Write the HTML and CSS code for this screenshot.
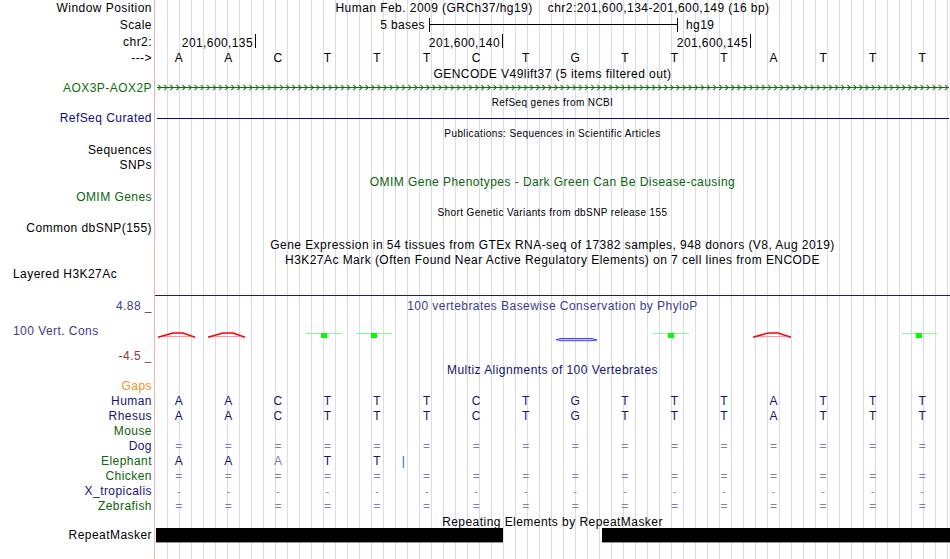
FILE: index.html
```html
<!DOCTYPE html>
<html lang="en">

<head>
	<meta charset="UTF-8">
	<meta name="viewport" content="width=device-width, initial-scale=1.0">
	<title>Genome Browser - chr2:201,600,134-201,600,149</title>
	<link rel="stylesheet" href="styles.css">
</head>

<body>
	<div class="browser">

		<div class="row r-pos">
			<div class="lab">Window Position</div>
			<div class="trk">Human Feb. 2009 (GRCh37/hg19)&nbsp;&nbsp;&nbsp; chr2:201,600,134-201,600,149 (16 bp)</div>
		</div>

		<div class="row r-scale">
			<div class="lab">Scale</div>
			<div class="trk">
				<svg width="795" height="17">
					<line x1="274" y1="7.5" x2="522" y2="7.5" stroke="#000" />
					<line x1="274.5" y1="1" x2="274.5" y2="15" stroke="#000" />
					<line x1="522.5" y1="1" x2="522.5" y2="15" stroke="#000" />
					<text x="270" y="12" text-anchor="end">5 bases</text>
					<text x="531" y="12">hg19</text>
				</svg>
			</div>
		</div>

		<div class="row r-chr">
			<div class="lab">chr2:</div>
			<div class="trk">
				<svg width="795" height="17">
					<line x1="100.5" y1="0" x2="100.5" y2="14" stroke="#000" />
					<line x1="347.5" y1="0" x2="347.5" y2="14" stroke="#000" />
					<line x1="595.5" y1="0" x2="595.5" y2="14" stroke="#000" />
					<text x="98" y="12.6" text-anchor="end">201,600,135</text>
					<text x="345" y="12.6" text-anchor="end">201,600,140</text>
					<text x="593" y="12.6" text-anchor="end">201,600,145</text>
				</svg>
			</div>
		</div>

		<div class="row r-bases">
			<div class="lab">---&gt;</div>
			<div class="trk">
				<div class="bases">
					<span>A</span><span>A</span><span>C</span><span>T</span>
					<span>T</span><span>T</span><span>C</span><span>T</span>
					<span>G</span><span>T</span><span>T</span><span>T</span>
					<span>A</span><span>T</span><span>T</span><span>T</span>
				</div>
			</div>
		</div>

		<div class="row r-gencode">
			<div class="lab"></div>
			<div class="trk">GENCODE V49lift37 (5 items filtered out)</div>
		</div>

		<div class="row r-gene">
			<div class="lab c-gene">AOX3P-AOX2P</div>
			<div class="trk">
				<svg width="795" height="10">
					<defs>
						<pattern id="chev" x="2" y="0" width="6.1" height="10" patternUnits="userSpaceOnUse">
							<path d="M1.2 1.8 L3.7 4.5 L1.2 7.2" fill="none" stroke="#0b6e0b" />
						</pattern>
					</defs>
					<rect x="2" y="4" width="792" height="1" fill="#0b6e0b" />
					<rect x="2" y="0" width="792" height="10" fill="url(#chev)" />
				</svg>
			</div>
		</div>

		<div class="row r-refseq-t small">
			<div class="lab"></div>
			<div class="trk">RefSeq genes from NCBI</div>
		</div>

		<div class="row r-refseq">
			<div class="lab c-refseq">RefSeq Curated</div>
			<div class="trk">
				<svg width="795" height="10">
					<rect x="2" y="5" width="792" height="1" fill="#0c0c78" />
				</svg>
			</div>
		</div>

		<div class="row r-pubs small">
			<div class="lab"></div>
			<div class="trk">Publications: Sequences in Scientific Articles</div>
		</div>

		<div class="row r-seq">
			<div class="lab">Sequences</div>
			<div class="trk"></div>
		</div>

		<div class="row r-snps">
			<div class="lab">SNPs</div>
			<div class="trk"></div>
		</div>

		<div class="row r-omim-t">
			<div class="lab"></div>
			<div class="trk c-omim">OMIM Gene Phenotypes - Dark Green Can Be Disease-causing</div>
		</div>

		<div class="row r-omim">
			<div class="lab c-omim">OMIM Genes</div>
			<div class="trk"></div>
		</div>

		<div class="row r-dbsnp-t small">
			<div class="lab"></div>
			<div class="trk">Short Genetic Variants from dbSNP release 155</div>
		</div>

		<div class="row r-dbsnp">
			<div class="lab">Common dbSNP(155)</div>
			<div class="trk"></div>
		</div>

		<div class="row r-gtex">
			<div class="lab"></div>
			<div class="trk">
				Gene Expression in 54 tissues from GTEx RNA-seq of 17382 samples, 948 donors (V8, Aug 2019)<br>
				H3K27Ac Mark (Often Found Near Active Regulatory Elements) on 7 cell lines from ENCODE
			</div>
		</div>

		<div class="row r-layer">
			<div class="lab lab-left">Layered H3K27Ac</div>
			<div class="trk"></div>
		</div>

		<div class="row r-rule">
			<div class="lab"></div>
			<div class="trk"></div>
		</div>

		<div class="row r-cons">
			<div class="lab cons-lab">
				<span class="c-phylo">4.88 _</span>
				<span class="c-phylo lab-left">100 Vert. Cons</span>
				<span class="c-neg">-4.5 _</span>
			</div>
			<div class="trk">
				<div class="c-phylo">100 vertebrates Basewise Conservation by PhyloP</div>
				<svg width="795" height="50">
					<!-- negative scores -->
					<g class="neg">
						<line x1="8" y1="24.5" x2="35" y2="24.5" />
						<line x1="58" y1="24.5" x2="85" y2="24.5" />
						<line x1="603" y1="24.5" x2="631" y2="24.5" />
						<polyline points="3,25.3 18,21 28,21 40,25.3" />
						<polyline points="53,25.3 68,21 78,21 90,25.3" />
						<polyline points="598,25.3 613,21 623,21 636,25.3" />
					</g>
					<!-- positive scores -->
					<g class="pos">
						<line x1="151" y1="21.5" x2="187" y2="21.5" />
						<line x1="201" y1="21.5" x2="237" y2="21.5" />
						<line x1="498" y1="21.5" x2="534" y2="21.5" />
						<line x1="747" y1="21.5" x2="782" y2="21.5" />
						<rect x="166" y="21" width="6" height="5" />
						<rect x="216" y="21" width="6" height="5" />
						<rect x="513" y="21" width="6" height="5" />
						<rect x="761" y="21" width="6" height="5" />
					</g>
					<path d="M401 27.6 L406 26.5 L437 26.5 L442 28 L437 28.7 L406 28.7 Z" fill="#c8c8ff" stroke="#1a1aff" stroke-width="0.8" />
				</svg>
			</div>
		</div>

		<div class="row r-multiz-t">
			<div class="lab"></div>
			<div class="trk c-multiz">Multiz Alignments of 100 Vertebrates</div>
		</div>

		<div class="row r-species">
			<div class="lab c-gaps">Gaps</div>
			<div class="trk"></div>
		</div>

		<div class="row r-species">
			<div class="lab c-multiz">Human</div>
			<div class="trk">
				<div class="bases c-multiz">
					<span>A</span><span>A</span><span>C</span><span>T</span>
					<span>T</span><span>T</span><span>C</span><span>T</span>
					<span>G</span><span>T</span><span>T</span><span>T</span>
					<span>A</span><span>T</span><span>T</span><span>T</span>
				</div>
			</div>
		</div>

		<div class="row r-species">
			<div class="lab c-multiz">Rhesus</div>
			<div class="trk">
				<div class="bases c-multiz">
					<span>A</span><span>A</span><span>C</span><span>T</span>
					<span>T</span><span>T</span><span>C</span><span>T</span>
					<span>G</span><span>T</span><span>T</span><span>T</span>
					<span>A</span><span>T</span><span>T</span><span>T</span>
				</div>
			</div>
		</div>

		<div class="row r-species">
			<div class="lab c-clade">Mouse</div>
			<div class="trk"></div>
		</div>

		<div class="row r-species">
			<div class="lab c-multiz">Dog</div>
			<div class="trk">
				<div class="bases dim">
					<span>=</span><span>=</span><span>=</span><span>=</span>
					<span>=</span><span>=</span><span>=</span><span>=</span>
					<span>=</span><span>=</span><span>=</span><span>=</span>
					<span>=</span><span>=</span><span>=</span><span>=</span>
				</div>
			</div>
		</div>

		<div class="row r-species">
			<div class="lab c-clade">Elephant</div>
			<div class="trk">
				<div class="bases c-multiz">
					<span>A</span><span>A</span><span class="dim">A</span><span>T</span>
					<span>T</span><span class="gapbar">|</span>
				</div>
			</div>
		</div>

		<div class="row r-species">
			<div class="lab c-clade">Chicken</div>
			<div class="trk">
				<div class="bases dim">
					<span>=</span><span>=</span><span>=</span><span>=</span>
					<span>=</span><span>=</span><span>=</span><span>=</span>
					<span>=</span><span>=</span><span>=</span><span>=</span>
					<span>=</span><span>=</span><span>=</span><span>=</span>
				</div>
			</div>
		</div>

		<div class="row r-species">
			<div class="lab c-multiz">X_tropicalis</div>
			<div class="trk">
				<div class="bases dim dash">
					<span>-</span><span>-</span><span>-</span><span>-</span>
					<span>-</span><span>-</span><span>-</span><span>-</span>
					<span>-</span><span>-</span><span>-</span><span>-</span>
					<span>-</span><span>-</span><span>-</span><span>-</span>
				</div>
			</div>
		</div>

		<div class="row r-species">
			<div class="lab c-clade">Zebrafish</div>
			<div class="trk">
				<div class="bases dim">
					<span>=</span><span>=</span><span>=</span><span>=</span>
					<span>=</span><span>=</span><span>=</span><span>=</span>
					<span>=</span><span>=</span><span>=</span><span>=</span>
					<span>=</span><span>=</span><span>=</span><span>=</span>
				</div>
			</div>
		</div>

		<div class="row r-rmsk-t">
			<div class="lab"></div>
			<div class="trk">Repeating Elements by RepeatMasker</div>
		</div>

		<div class="row r-rmsk">
			<div class="lab">RepeatMasker</div>
			<div class="trk">
				<svg width="795" height="15">
					<rect x="1" y="0" width="347" height="14.4" fill="#000" />
					<rect x="447" y="0" width="348" height="14.4" fill="#000" />
				</svg>
			</div>
		</div>

		<div class="row r-fill">
			<div class="lab"></div>
			<div class="trk"></div>
		</div>

	</div>
</body>

</html>
```

FILE: styles.css
```css
*,
*::before,
*::after {
	box-sizing: border-box;
}

html, body {
	margin: 0;
	background: #fff;
	color: #000;
	font-family: "Liberation Sans", Arial, sans-serif;
	font-size: 12px;
	letter-spacing: 0.45px;
}

.browser {
	width: 950px;
	height: 559px;
	overflow: hidden;
	display: flex;
	flex-direction: column;
}

.row {
	display: flex;
	flex: none;
	white-space: nowrap;
}

.lab {
	width: 155px;
	flex: none;
	text-align: right;
	padding-right: 2px;
	border-right: 1px solid #f3b2b2;
}

.lab-left {
	text-align: left;
	padding-left: 13px;
}

.trk {
	flex: 1;
	text-align: center;
	/* light guide lines every 12px */
	background-image: repeating-linear-gradient(90deg, transparent 0 11px, #dadaf4 11px 12px);
	background-position: 1px 0;
	background-repeat: repeat-y;
}

svg {
	display: block;
	overflow: visible;
	font-family: "Liberation Sans", Arial, sans-serif;
	font-size: 12px;
	letter-spacing: 0.4px;
}

.small {
	font-size: 10px;
	letter-spacing: 0.4px;
}

/* row heights */
.r-pos     { height: 17px; line-height: 17px; }
.r-scale   { height: 17px; line-height: 17px; }
.r-chr     { height: 17px; line-height: 17px; }
.r-bases   { height: 14px; line-height: 14px; }
.r-gencode { height: 18px; line-height: 18px; }
.r-gene    { height: 10px; line-height: 10px; }
.r-refseq-t { height: 20px; line-height: 20px; }
.r-refseq  { height: 10px; line-height: 10px; }
.r-pubs    { height: 22px; line-height: 22px; }
.r-seq     { height: 10px; line-height: 10px; }
.r-snps    { height: 21px; line-height: 21px; }
.r-omim-t  { height: 13px; line-height: 13px; }
.r-omim    { height: 16px; line-height: 16px; }
.r-dbsnp-t { height: 16px; line-height: 16px; }
.r-dbsnp   { height: 14px; line-height: 14px; }
.r-gtex    { height: 33px; line-height: 15px; }
.r-gtex .trk { padding-top: 3px; }
.r-layer   { height: 27px; line-height: 12px; }
.r-rule    { height: 1px; }
.r-rule .trk { background: #1c1c80; }
.r-cons    { height: 66px; line-height: 12px; }
.r-cons .trk { padding-top: 4px; }
.r-multiz-t { height: 17px; line-height: 17px; }
.r-species { height: 15px; line-height: 15px; }
.r-rmsk-t  { height: 14px; line-height: 16px; }
.r-rmsk    { height: 15px; line-height: 15px; }
.r-fill    { flex: 1; }

.cons-lab {
	display: flex;
	flex-direction: column;
	justify-content: space-between;
	padding-top: 4px;
}

.bases {
	display: grid;
	grid-template-columns: repeat(16, 1fr);
	width: 793px;
	margin-left: -1px;
	letter-spacing: 0;
}

.gapbar {
	justify-self: start;
	color: #1f5fa8;
}

.dim {
	color: #7c7cb6;
}

.dash span {
	font-size: 10px;
}

/* colours */
.c-gene   { color: #0b6e0b; }
.c-refseq { color: #0c0c78; }
.c-omim   { color: #0a640a; }
.c-phylo  { color: #3c3c8c; }
.c-neg    { color: #8c3c3c; }
.c-multiz { color: #14146e; }
.c-clade  { color: #0a640a; }
.c-gaps   { color: #ee9416; }

.neg line {
	stroke: #ff9a9a;
	stroke-width: 1;
}

.neg polyline {
	fill: none;
	stroke: #ff0000;
	stroke-width: 1.6;
}

.pos line {
	stroke: #80ff80;
	stroke-width: 1;
}

.pos rect {
	fill: #00ff00;
}
```
